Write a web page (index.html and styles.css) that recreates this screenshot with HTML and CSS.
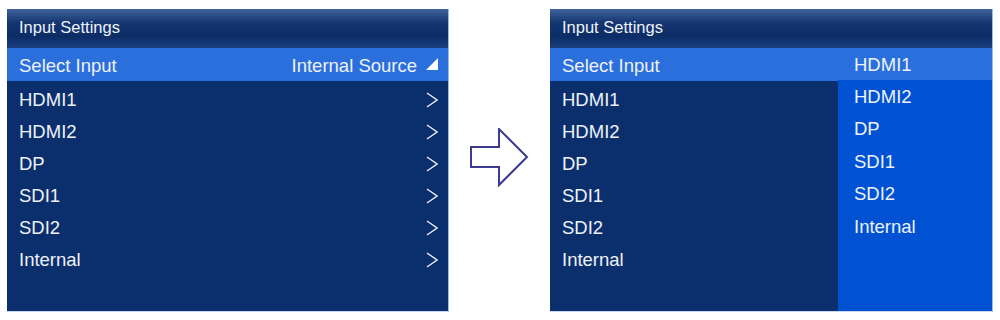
FILE: index.html
```html
<!DOCTYPE html>
<html lang="en">
<head>
  <meta charset="UTF-8" />
  <title>Input Settings</title>
  <link rel="stylesheet" href="styles.css">
</head>
<body>
  <div class="stage">
    <div class="panel">
      <div class="title">Input Settings</div>
      <div class="select-row">
        <span>Select Input</span>
        <span class="value">Internal Source <svg class="corner" width="12" height="12" viewBox="0 0 12 12"><polygon points="12,0 12,12 0,12" fill="#fff"/></svg></span>
      </div>
      <ul class="list">
        <li>HDMI1 <svg class="chev" width="12" height="16" viewBox="0 0 12 16"><polyline points="1,1 11,8 1,15" /></svg></li>
        <li>HDMI2 <svg class="chev" width="12" height="16" viewBox="0 0 12 16"><polyline points="1,1 11,8 1,15" /></svg></li>
        <li>DP <svg class="chev" width="12" height="16" viewBox="0 0 12 16"><polyline points="1,1 11,8 1,15" /></svg></li>
        <li>SDI1 <svg class="chev" width="12" height="16" viewBox="0 0 12 16"><polyline points="1,1 11,8 1,15" /></svg></li>
        <li>SDI2 <svg class="chev" width="12" height="16" viewBox="0 0 12 16"><polyline points="1,1 11,8 1,15" /></svg></li>
        <li>Internal <svg class="chev" width="12" height="16" viewBox="0 0 12 16"><polyline points="1,1 11,8 1,15" /></svg></li>
      </ul>
    </div>

    <div class="arrow-box">
      <svg width="60" height="60" viewBox="0 0 60 60">
        <polygon points="1,19 29,19 29,1 57,29 29,57 29,39 1,39" fill="#fff" stroke="#3b3b92" stroke-width="2" stroke-linejoin="miter"/>
      </svg>
    </div>

    <div class="panel right">
      <div class="title">Input Settings</div>
      <div class="split">
        <div class="main">
          <div class="select-row"><span>Select Input</span></div>
          <ul class="list">
            <li>HDMI1</li>
            <li>HDMI2</li>
            <li>DP</li>
            <li>SDI1</li>
            <li>SDI2</li>
            <li>Internal</li>
          </ul>
        </div>
        <ul class="dropdown">
          <li class="active">HDMI1</li>
          <li>HDMI2</li>
          <li>DP</li>
          <li>SDI1</li>
          <li>SDI2</li>
          <li>Internal</li>
        </ul>
      </div>
    </div>
  </div>
</body>
</html>
```

FILE: styles.css
```css
body {
  margin: 0;
  background: #fff;
  font-family: "Liberation Sans", Arial, sans-serif;
}

.stage {
  display: flex;
  align-items: flex-start;
  padding: 9px 0 0 7px;
}

.panel {
  width: 442px;
  height: 303px;
  background: #0b2f6c;
  border-right: 1px solid #9bbbe8;
  border-bottom: 1px solid #c8d8f0;
  box-sizing: border-box;
  color: #eef2fa;
  display: flex;
  flex-direction: column;
}

.panel.right {
  width: 443px;
}

.title {
  height: 39px;
  box-sizing: border-box;
  padding: 9px 12px 0;
  font-size: 16.5px;
  background: linear-gradient(#40639a 0%, #153671 35%, #0c2c66 70%, #1a3f7e 100%);
}

.select-row {
  height: 33px;
  box-sizing: border-box;
  display: flex;
  align-items: center;
  justify-content: space-between;
  padding: 2px 10px 0 12px;
  font-size: 18.5px;
  background: #2b6fdc;
}

.value {
  display: flex;
  align-items: center;
  gap: 9px;
}

.corner {
  margin-top: -3px;
}

.list {
  list-style: none;
  margin: 0;
  padding: 3px 0 0;
}

.list li {
  height: 32px;
  display: flex;
  align-items: center;
  justify-content: space-between;
  padding: 0 10px 0 12px;
  font-size: 18.5px;
}

.chev {
  fill: none;
  stroke: #e8eef8;
  stroke-width: 1.4;
}

.arrow-box {
  width: 101px;
  height: 303px;
  display: flex;
  align-items: center;
  justify-content: center;
  padding-bottom: 5px;
  box-sizing: border-box;
}

.split {
  flex: 1;
  display: flex;
}

.main {
  flex: 1;
}

.dropdown {
  width: 154px;
  list-style: none;
  margin: 0;
  padding: 0;
  background: #0052d3;
}

.dropdown li {
  height: 32.5px;
  display: flex;
  align-items: center;
  padding: 1px 16px 0;
  box-sizing: border-box;
  font-size: 18.5px;
}

.dropdown li.active {
  height: 32px;
  background: #2b6fdc;
}
```
